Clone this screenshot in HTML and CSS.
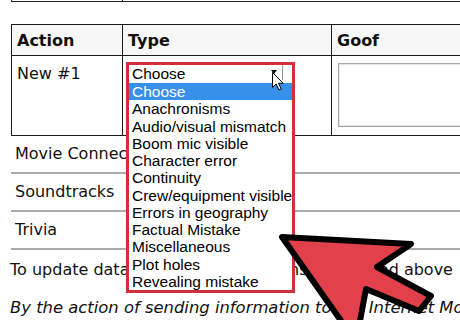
FILE: index.html
```html
<!DOCTYPE html>
<html lang="en">
<head>
    <meta charset="UTF-8">
    <meta name="viewport" content="width=device-width, initial-scale=1.0">
    <title>Add a Goof</title>
    <link rel="stylesheet" href="styles.css">
</head>
<body>
    <div class="page">
        <div class="prev-table">
            <div class="prev-cell c1"></div>
            <div class="prev-cell c2"></div>
        </div>

        <table class="goofs">
            <thead>
                <tr>
                    <th class="col-action">Action</th>
                    <th class="col-type">Type</th>
                    <th class="col-goof">Goof</th>
                </tr>
            </thead>
            <tbody>
                <tr>
                    <td class="cell-action">New #1</td>
                    <td class="cell-type">
                        <div class="select-wrap">
                            <div class="picker">
                                <div class="picker-current">
                                    Choose
                                    <span class="caret"></span>
                                    <svg class="cursor" width="12" height="19" viewBox="0 0 12 19">
                                        <path d="M0.5 0.5 V15.5 L4.2 12 L7 18 L9.2 17 L6.5 11.2 H11.2 Z" fill="#fff" stroke="#000" stroke-width="1" stroke-linejoin="round"/>
                                    </svg>
                                </div>
                                <ul class="picker-list">
                                    <li class="selected">Choose</li>
                                    <li>Anachronisms</li>
                                    <li>Audio/visual mismatch</li>
                                    <li>Boom mic visible</li>
                                    <li>Character error</li>
                                    <li>Continuity</li>
                                    <li>Crew/equipment visible</li>
                                    <li>Errors in geography</li>
                                    <li>Factual Mistake</li>
                                    <li>Miscellaneous</li>
                                    <li>Plot holes</li>
                                    <li>Revealing mistake</li>
                                </ul>
                            </div>
                        </div>
                    </td>
                    <td class="cell-goof"><textarea></textarea></td>
                </tr>
            </tbody>
        </table>

        <ul class="sections">
            <li>Movie Connections</li>
            <li>Soundtracks</li>
            <li>Trivia</li>
        </ul>

        <p class="note">To update data, please use the forms mentioned above</p>
        <p class="legal">By the action of sending information to the Internet Movie Database you agree</p>
    </div>

    <!-- big annotation arrow -->
    <svg class="pointer" width="460" height="320" viewBox="0 0 460 320">
        <polygon points="282,237 411,244 377,267 431,296 419,311 366,289 356,342"
                 fill="#e2404b" stroke="#000" stroke-width="6" stroke-linejoin="round"/>
    </svg>
</body>
</html>
```

FILE: styles.css
```css
html, body {
    margin: 0;
    height: 100%;
    overflow: hidden;
    background: #fff;
}
body {
    font-family: "DejaVu Sans", Verdana, sans-serif;
    font-size: 16px;
    color: #111;
}
.page {
    padding-left: 10px;
}
.prev-table {
    display: flex;
    height: 1px;
    margin-left: 1px;
    margin-bottom: 22px;
    border-bottom: 1px solid #222;
}
.prev-cell {
    border-left: 1px solid #222;
}
.prev-cell.c1 {
    width: 110px;
}
.prev-cell.c2 {
    flex: 1;
}
.goofs {
    border-collapse: collapse;
    table-layout: fixed;
    width: 560px;
    margin-left: 1px;
}
.goofs th, .goofs td {
    border: 1px solid #1a1a1a;
    text-align: left;
    vertical-align: top;
    box-sizing: border-box;
}
.goofs th {
    background: #f7f7f7;
    height: 31px;
    padding: 0 5px;
    vertical-align: middle;
    font-weight: bold;
}
.col-action {
    width: 111px;
}
.col-type {
    width: 209px;
}
.col-goof {
    width: 240px;
}
.goofs td {
    height: 80px;
}
.cell-action {
    padding: 8px 5px;
}
.cell-type {
    padding: 7px 3px;
}
.cell-goof {
    padding: 7px 6px;
}
textarea {
    display: block;
    width: 200px;
    height: 64px;
    box-sizing: border-box;
    border: 1px solid #a8a8a8;
    box-shadow: inset 0 0 0 1px #e6e6e6;
    resize: none;
}
.select-wrap {
    position: relative;
    width: 169px;
    height: 20px;
}
.picker {
    position: absolute;
    top: -1px;
    left: 0;
    width: 169px;
    box-sizing: border-box;
    border: 3px solid #d12f3c;
    background: #fff;
    font-family: "Liberation Sans", Arial, sans-serif;
    font-size: 15.5px;
    color: #000;
    z-index: 2;
}
.picker-current {
    position: relative;
    height: 18px;
    line-height: 18px;
    padding-left: 3px;
}
.picker-current::after {
    content: "";
    position: absolute;
    left: 153px;
    top: 0;
    width: 1px;
    height: 15px;
    background: #999;
}
.caret {
    position: absolute;
    right: 15px;
    top: 5px;
    border-left: 3px solid transparent;
    border-right: 3px solid transparent;
    border-top: 4px solid #111;
}
.cursor {
    position: absolute;
    left: 143px;
    top: 7px;
    z-index: 3;
}
.picker-list {
    list-style: none;
    margin: 0;
    padding: 0;
}
.picker-list li {
    line-height: 17.27px;
    height: 17.27px;
    padding-left: 3px;
    white-space: nowrap;
}
.picker-list li.selected {
    background: #3790ea;
    color: #fff;
}
.sections {
    list-style: none;
    margin: 0 0 0 1px;
    padding: 0;
}
.sections li {
    height: 36px;
    line-height: 36px;
    padding-left: 4px;
    border-bottom: 2px solid #aaa;
    white-space: nowrap;
}
.note {
    margin: 10px 0 18px;
    line-height: 20px;
    white-space: nowrap;
}
.legal {
    margin: 0;
    line-height: 20px;
    font-size: 16.4px;
    font-style: italic;
    white-space: nowrap;
}
.pointer {
    position: absolute;
    top: 0;
    left: 0;
    pointer-events: none;
    z-index: 5;
}
```
